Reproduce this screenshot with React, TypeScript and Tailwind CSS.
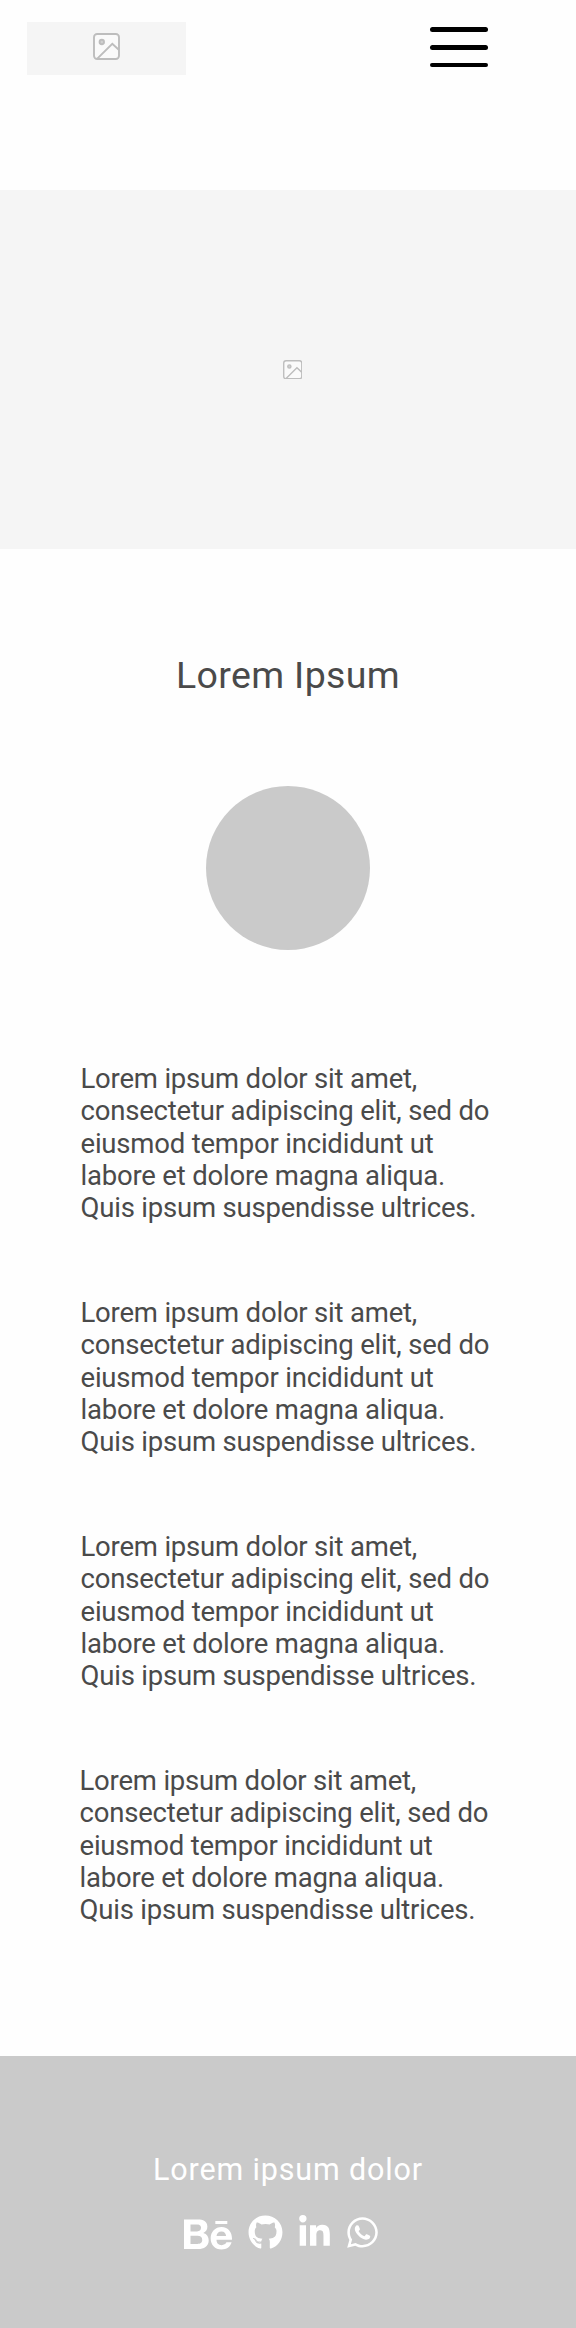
import { FaBehance, FaGithub, FaLinkedinIn, FaWhatsapp } from "react-icons/fa";

const lines = [
  "Lorem ipsum dolor sit amet,",
  "consectetur adipiscing elit, sed do",
  "eiusmod tempor incididunt ut",
  "labore et dolore magna aliqua.",
  "Quis ipsum suspendisse ultrices.",
];

function Placeholder({ className }: { className: string }) {
  return (
    <svg viewBox="0 0 27 27" className={className} fill="none" stroke="#bdbdbd" strokeWidth="1.9">
      <rect x="1" y="1" width="25" height="25" rx="3.2" fill="#fafafa" />
      <circle cx="8.8" cy="9" r="2.2" fill="#d0d0d0" />
      <path d="M4.3 25.6 19.3 10.8l6.5 6" />
    </svg>
  );
}

function Paragraph({ className = "" }: { className?: string }) {
  return (
    <p className={"h-[234px] text-[27.5px] leading-[32.3px] tracking-[-0.2px] whitespace-nowrap " + className}>
      {lines.map((line) => (
        <span key={line} className="block">{line}</span>
      ))}
    </p>
  );
}

export default function App() {
  return (
    <div className="flex h-[2328px] w-[576px] flex-col overflow-hidden bg-[#fefefe] font-['Roboto',sans-serif] text-[#4a4a4a]">
      <header className="flex h-[190px] items-start justify-between pt-[22px] pr-[88px] pl-[27px]">
        <div className="flex h-[53px] w-[159px] justify-center bg-[#f5f5f5] pt-[10.5px]">
          <Placeholder className="size-[27px]" />
        </div>
        <button aria-label="Menu" className="mt-[5px] flex w-[58px] flex-col gap-[13.5px]">
          <span className="h-[4.5px] rounded-full bg-black" />
          <span className="h-[4.5px] rounded-full bg-black" />
          <span className="h-[4px] rounded-full bg-black" />
        </button>
      </header>
      <section className="flex h-[359px] justify-center bg-[#f5f5f5] pt-[169.5px] pl-[9px]">
        <Placeholder className="size-[19.5px]" />
      </section>
      <main className="flex h-[1507px] flex-col">
        <h1 className="mt-[104px] h-[44px] text-center text-[37.5px] leading-[44px] tracking-[0.35px]">Lorem Ipsum</h1>
        <div className="mt-[89px] size-[164px] shrink-0 self-center rounded-full bg-[#cacaca]" />
        <div className="mt-[113px] pl-[80.5px]">
          <Paragraph />
          <Paragraph />
          <Paragraph />
          <Paragraph className="-ml-px" />
        </div>
      </main>
      <footer className="flex grow flex-col bg-[#cacaca] text-white">
        <p className="mt-[96px] h-[36px] text-center text-[30.5px] leading-[36px] tracking-[0.85px]">Lorem ipsum dolor</p>
        <div className="mt-[27px] flex h-[36px] pl-[184px]">
          <FaBehance className="mt-[-2px] h-[43px] w-[48px]" />
          <FaGithub className="ml-[16px] size-[35px]" />
          <FaLinkedinIn className="ml-[16px] h-[35px] w-[31px]" />
          <FaWhatsapp className="ml-[17px] h-[35px] w-[31px]" />
        </div>
      </footer>
    </div>
  );
}
